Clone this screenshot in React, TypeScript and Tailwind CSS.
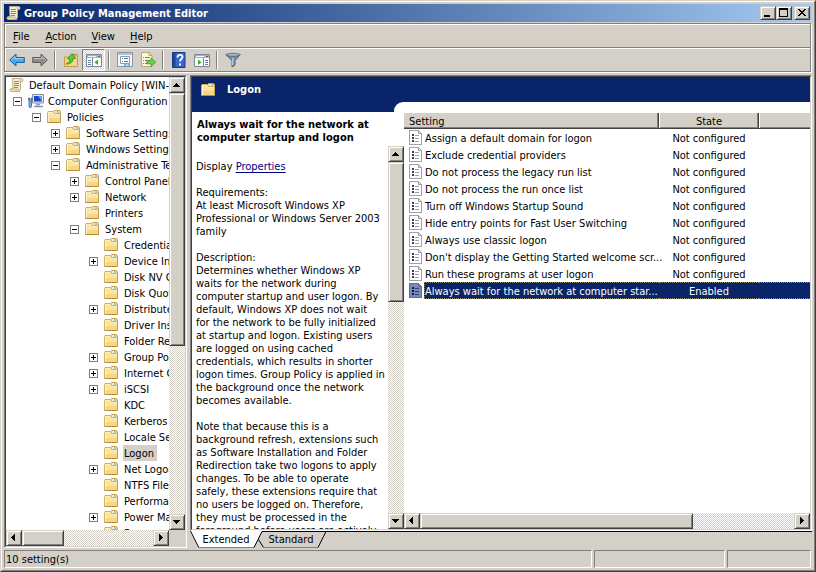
import type { ReactNode } from 'react';

const raised =
  'border border-t-[#d4d0c8] border-l-[#d4d0c8] border-r-[#404040] border-b-[#404040] bg-[#d4d0c8] shadow-[inset_1px_1px_0_#fff,inset_-1px_-1px_0_#808080]';
const checker =
  'bg-[image:repeating-conic-gradient(#ffffff_0_25%,#d4d0c8_0_50%)] bg-[length:2px_2px]';
const sunken =
  'border border-t-[#808080] border-l-[#808080] border-r-white border-b-white';

type Dir = 'up' | 'down' | 'left' | 'right';

const arrows: Record<Dir, string> = {
  up: 'M6 5h1v1h1v1h1v1h1v1H3V8h1V7h1V6h1z',
  down: 'M3 5h7v1H9v1H8v1H7v1H6V8H5V7H4V6H3z',
  left: 'M4 6h1V5h1V4h1V3h1v7H7V9H6V8H5V7H4z',
  right: 'M5 3h1v1h1v1h1v1h1v1H8v1H7v1H6v1H5z',
};

function ArrowButton({ dir }: { dir: Dir }) {
  return (
    <button type="button" aria-label={`Scroll ${dir}`} className={`size-4 shrink-0 ${raised}`}>
      <svg className="block" width="14" height="14" viewBox="0 0 14 14" shapeRendering="crispEdges">
        <path d={arrows[dir]} />
      </svg>
    </button>
  );
}

function VScroll({ thumb }: { thumb: string }) {
  return (
    <div className={`flex w-4 shrink-0 flex-col ${checker}`}>
      <ArrowButton dir="up" />
      <div className="min-h-0 flex-1">
        <div className={`${raised} ${thumb}`} />
      </div>
      <ArrowButton dir="down" />
    </div>
  );
}

function HScroll({ thumb }: { thumb: string }) {
  return (
    <div className={`flex h-4 min-w-0 flex-1 ${checker}`}>
      <ArrowButton dir="left" />
      <div className="min-w-0 flex-1">
        <div className={`h-4 ${raised} ${thumb}`} />
      </div>
      <ArrowButton dir="right" />
    </div>
  );
}

function FolderIcon() {
  return (
    <svg className="size-4 shrink-0" viewBox="0 0 16 16">
      <path d="M6.500 4.500V2.500l1-1h5l1 1v4h-7z" fill="#f3d48a" stroke="#c9a050" />
      <path d="M8 3h4" stroke="#fff" />
      <path d="M10 3h2" stroke="#6aa5d8" />
      <path d="M.5 3.500l.5-1h5l1 2h6.500V13.500H.5z" fill="#fbe3a0" stroke="#d5ae5c" />
      <path d="M1 9h12v4H1z" fill="#f6d684" />
      <path d="M1.500 13V3.500H6l1 2h6" fill="none" stroke="#fdf0c4" />
      <path d="M.5 13.500h13" stroke="#b38d3c" />
      <path d="M13.500 5v8.500" stroke="#c49c48" />
    </svg>
  );
}

function ScrollIcon() {
  return (
    <svg className="size-4 shrink-0" viewBox="0 0 16 16">
      <path d="M3.500 1.500h9c2 0 2 3 .5 3h-1.500V12l-1 2.500H2.500c-2 0-2-3 0-3h1.500z" fill="#f7efd0" stroke="#b8aa82" />
      <path d="M2 12h7c1 0 1 2.500 1.500 2.500H2.500C1 14.500 1 12.500 2 12z" fill="#eaddb0" stroke="#b8aa82" strokeWidth=".8" />
      <path d="M12 1.500c-1 1-.5 3 0 3" fill="none" stroke="#b8aa82" />
      <path d="M5 4.500h5M5 6.500h5M5 8.500h5M5 10.500h4" stroke="#8f8568" />
    </svg>
  );
}

function ComputerIcon() {
  return (
    <svg className="size-4 shrink-0" viewBox="0 0 16 16">
      <path d="M4.500 1.500h11v8.500h-11z" fill="#dfe5ee" stroke="#8792a5" />
      <path d="M6 3h8v5.500H6z" fill="#1747c8" />
      <path d="M10 3h4v5.500z" fill="#6f9cf2" />
      <path d="M8 10.500h4v2H8z" fill="#9aa5b5" />
      <path d="M6 13.500h9" stroke="#8792a5" strokeWidth="1.500" />
      <path d="M.5 6.500V5h1v2h1.500V5h1v1.500L3.500 8v5.500l-.5 1H1.500l-.5-1V8z" fill="#7fb0dc" stroke="#41658c" strokeWidth=".8" />
    </svg>
  );
}

function SettingIcon({ selected }: { selected?: boolean }) {
  const page = selected ? '#7b8ab5' : '#fff';
  const edge = selected ? '#5c6da0' : '#a2a2a2';
  const line = selected ? '#2d3f78' : '#9aa0b0';
  return (
    <svg className="h-[15px] w-[14px] shrink-0" viewBox="0 0 14 15" shapeRendering="crispEdges">
      <path d="M.5.500h9l3 3v11H.5z" fill={page} stroke={edge} />
      <path d="M9.500.500v3h3" fill="none" stroke={edge} />
      <path d="M3 4h2v2H3zM3 7h2v2H3zM3 10h2v2H3z" fill={selected ? '#0f1c4d' : '#3a3f55'} />
      <path d="M6 5.500h4M6 8.500h4M6 11.500h4" stroke={line} />
    </svg>
  );
}

function Twisty({ open }: { open: boolean }) {
  return (
    <button type="button" aria-label={open ? 'Collapse' : 'Expand'} className="size-[9px] shrink-0">
      <svg className="block" width="9" height="9" viewBox="0 0 9 9" shapeRendering="crispEdges">
        <path d="M.5.500h8v8h-8z" fill="#fff" stroke="#808080" />
        <path d={open ? 'M2 4.500h5' : 'M2 4.500h5M4.500 2v5'} stroke="#000" />
      </svg>
    </button>
  );
}

const indent = ['pl-[3px]', 'pl-[7px]', 'pl-[26px]', 'pl-[45px]', 'pl-[64px]', 'pl-[83px]'];

// [level, label, '+' closed, '-' open, '' leaf]
const tree: [number, string, string][] = [
  [0, 'Default Domain Policy [WIN-1', ''],
  [1, 'Computer Configuration', '-'],
  [2, 'Policies', '-'],
  [3, 'Software Settings', '+'],
  [3, 'Windows Settings', '+'],
  [3, 'Administrative Templates', '-'],
  [4, 'Control Panel', '+'],
  [4, 'Network', '+'],
  [4, 'Printers', ''],
  [4, 'System', '-'],
  [5, 'Credentials Delegation', ''],
  [5, 'Device Installation', '+'],
  [5, 'Disk NV Cache', ''],
  [5, 'Disk Quotas', ''],
  [5, 'Distributed COM', '+'],
  [5, 'Driver Installation', ''],
  [5, 'Folder Redirection', ''],
  [5, 'Group Policy', '+'],
  [5, 'Internet Communication', '+'],
  [5, 'iSCSI', '+'],
  [5, 'KDC', ''],
  [5, 'Kerberos', ''],
  [5, 'Locale Services', ''],
  [5, 'Logon', ''],
  [5, 'Net Logon', '+'],
  [5, 'NTFS Filesystem', ''],
  [5, 'Performance Control Panel', ''],
  [5, 'Power Management', '+'],
  [5, 'Recovery', ''],
];

const settings = [
  'Assign a default domain for logon',
  'Exclude credential providers',
  'Do not process the legacy run list',
  'Do not process the run once list',
  'Turn off Windows Startup Sound',
  'Hide entry points for Fast User Switching',
  'Always use classic logon',
  "Don't display the Getting Started welcome scr...",
  'Run these programs at user logon',
  'Always wait for the network at computer star...',
];

const requirements = `At least Microsoft Windows XP
Professional or Windows Server 2003
family`;

const description = `Determines whether Windows XP
waits for the network during
computer startup and user logon. By
default, Windows XP does not wait
for the network to be fully initialized
at startup and logon. Existing users
are logged on using cached
credentials, which results in shorter
logon times. Group Policy is applied in
the background once the network
becomes available.`;

const note = `Note that because this is a
background refresh, extensions such
as Software Installation and Folder
Redirection take two logons to apply
changes. To be able to operate
safely, these extensions require that
no users be logged on. Therefore,
they must be processed in the
foreground before users are actively`;

function Tool({ label, pressed, children }: { label: string; pressed?: boolean; children: ReactNode }) {
  return (
    <button
      type="button"
      aria-label={label}
      className={`flex h-[22px] w-[23px] shrink-0 items-center justify-center ${pressed ? `${sunken} ${checker}` : ''}`}
    >
      <svg className="size-4" viewBox="0 0 16 16">
        {children}
      </svg>
    </button>
  );
}

function Sep() {
  return (
    <div className="flex w-2 shrink-0 justify-center">
      <div className="h-[18px] w-[2px] border-l border-[#808080] bg-white" />
    </div>
  );
}

function CaptionButton({ label, d }: { label: string; d: string }) {
  return (
    <button type="button" aria-label={label} className={`h-[14px] w-4 ${raised}`}>
      <svg className="block" width="14" height="12" viewBox="0 0 14 12" shapeRendering="crispEdges">
        <path d={d} fillRule="evenodd" />
      </svg>
    </button>
  );
}

export default function App() {
  return (
    <div className="h-screen w-full cursor-default overflow-hidden border border-t-[#d4d0c8] border-r-[#404040] border-b-[#404040] border-l-[#d4d0c8] bg-[#d4d0c8] font-['DejaVu_Sans_Condensed','DejaVu_Sans',sans-serif] text-[11px] leading-[13px] text-black">
      <div className="flex h-full flex-col border border-t-white border-r-[#808080] border-b-[#808080] border-l-white p-[2px]">
        <header className="flex h-[18px] shrink-0 items-center bg-linear-to-r from-[#0a246a] to-[#a6caf0] px-[2px]">
          <ScrollIcon />
          <h1 className="flex-1 pl-[2px] font-bold text-white">Group Policy Management Editor</h1>
          <CaptionButton label="Minimize" d="M3 8h6v2H3z" />
          <CaptionButton label="Maximize" d="M2 1h9v9H2zM3 3h7v6H3z" />
          <div className="w-[2px]" />
          <CaptionButton
            label="Close"
            d="M3 2h2v1h1v1h2V3h1V2h2v1h-1v1H9v1H8v1h1v1h1v1h1v1H9V8H8V7H6v1H5v1H3V8h1V7h1V6h1V5H5V4H4V3H3z"
          />
        </header>

        <div className="mt-px mr-px shrink-0 border border-[#808080] shadow-[1px_1px_0_#fff]">
          <nav className="flex h-[23px] items-center border-t border-l border-white">
            {['File', 'Action', 'View', 'Help'].map((m) => (
              <button key={m} type="button" className="pr-[7px] pl-2 first:pl-[7px] first:pr-2">
                <span className="underline underline-offset-2">{m[0]}</span>
                {m.slice(1)}
              </button>
            ))}
          </nav>
          <div className="flex h-6 items-center border-t border-[#808080] shadow-[inset_1px_1px_0_#fff]">
            <Tool label="Back">
              <path d="M.7 8L7 2v3.500h8.300v5H7V14z" fill="#45a9ea" stroke="#1d5f9e" />
              <path d="M2.500 8L6 4.700v2h8.300" fill="none" stroke="#a5dcff" />
            </Tool>
            <Tool label="Forward">
              <path d="M15.300 8L9 2v3.500H.7v5H9V14z" fill="#8d8d8d" stroke="#5e5e5e" />
              <path d="M1.700 6.600H10v-2L13.500 8" fill="none" stroke="#c6c6c6" />
            </Tool>
            <Sep />
            <Tool label="Up one level">
              <path d="M8.500 4V2.500h5.500V5" fill="#e9c36a" stroke="#b8923c" />
              <path d="M1.500 5h6l1-1h6v10.500h-13z" fill="#f6d684" stroke="#c69d45" />
              <path d="M3 12c2-.5 4-2.500 4-5H4.500L9 1.500 12.500 6.500h-2.300c0 4-4 6-7.200 5.500z" fill="#5ccb3b" stroke="#2e8b22" strokeWidth=".8" />
            </Tool>
            <Tool label="Show/Hide Console Tree" pressed>
              <path d="M.5 2.500h15v12H.5z" fill="#fff" stroke="#7d8794" />
              <path d="M1 3h14v3H1z" fill="#a9b2bf" />
              <path d="M2 4.500h8" stroke="#f2f4f7" />
              <path d="M12 4.500h2" stroke="#5b6573" />
              <path d="M6.500 6v8" stroke="#7d8794" />
              <path d="M2 8.500h3M2 10.500h3M2 12.500h3" stroke="#5f7fae" />
              <path d="M12 7.500v5.500L8.500 10.250z" fill="#2fae2f" />
            </Tool>
            <Sep />
            <Tool label="Properties">
              <path d="M.5.500h15v14H.5z" fill="#f4f6f9" stroke="#8d949e" />
              <path d="M1 1h14v2H1z" fill="#b9c1cc" />
              <path d="M3.500 4.500h9v7h-9z" fill="#fff" stroke="#8d9bb0" />
              <path d="M5 6.500h1M7 6.500h4M5 9.500h1M7 9.500h4" stroke="#5278ad" />
              <path d="M7 13h2.500M10.500 13H13" stroke="#39a9e8" strokeWidth="1.500" />
            </Tool>
            <Tool label="Export List">
              <path d="M1.500.500h7.500l3 3v11H1.500z" fill="#fdf6d8" stroke="#b5a675" />
              <path d="M9 .5v3h3" fill="#e8dba8" stroke="#b5a675" />
              <path d="M3 5.500h1M5 5.500h5M3 8.500h1M5 8.500h3M3 11.500h1M5 11.500h3" stroke="#7a7a8c" />
              <path d="M7 8.500h4V6l4.700 4.200L11 14.300v-2.500H7z" fill="#6bd04a" stroke="#35992a" strokeWidth=".8" />
            </Tool>
            <Sep />
            <Tool label="Help">
              <path d="M1.500.500h12.500v15H1.500z" fill="#3a66c8" stroke="#173a86" />
              <path d="M2 1h2.500v14H2z" fill="#1f449c" />
              <path d="M6.500 5.500c0-3.500 5-3.500 5-.5 0 2-2.500 2-2.500 4.500" fill="none" stroke="#fff" strokeWidth="1.800" />
              <path d="M8 11.500h2v2H8z" fill="#fff" />
            </Tool>
            <Tool label="Show/Hide Action Pane">
              <path d="M.5 2.500h15v12H.5z" fill="#fff" stroke="#7d8794" />
              <path d="M1 3h14v3H1z" fill="#a9b2bf" />
              <path d="M2 4.500h8" stroke="#f2f4f7" />
              <path d="M12 4.500h2" stroke="#5b6573" />
              <path d="M9.500 6v8" stroke="#7d8794" />
              <path d="M11 8.500h3M11 10.500h3M11 12.500h3" stroke="#5f7fae" />
              <path d="M4 7.500v5.500l3.500-2.750z" fill="#2fae2f" />
            </Tool>
            <Sep />
            <Tool label="Filter">
              <path d="M.8 2.500h14.400L10 8.500v4.500l-3 2V8.500z" fill="#7390a8" stroke="#4d6478" />
              <ellipse cx="8" cy="2.800" rx="7" ry="1.500" fill="#a3b8c9" stroke="#4d6478" strokeWidth=".8" />
              <path d="M7.800 6v7" stroke="#dbe7ef" />
            </Tool>
          </div>
        </div>

        <main className="mt-[3px] flex min-h-0 flex-1 gap-[3px]">
          <section className="flex w-[183px] shrink-0 border border-t-[#808080] border-r-white border-b-white border-l-[#808080]">
            <div className="flex min-w-0 flex-1 flex-col border border-t-[#404040] border-r-[#d4d0c8] border-b-[#d4d0c8] border-l-[#404040]">
              <div className="flex min-h-0 flex-1">
                <ul className="min-w-0 flex-1 overflow-hidden bg-white">
                  {tree.map(([level, label, state]) => (
                    <li key={label} className={`flex h-4 items-center ${indent[level]}`}>
                      {level > 0 && (
                        <span className="mr-[6px] flex w-[9px] shrink-0">
                          {state && <Twisty open={state === '-'} />}
                        </span>
                      )}
                      {level === 0 ? <ScrollIcon /> : level === 1 ? <ComputerIcon /> : <FolderIcon />}
                      <span
                        className={`ml-[3px] h-4 px-px leading-[18px] whitespace-nowrap ${label === 'Logon' ? 'bg-[#d4d0c8] pr-[3px]' : ''}`}
                      >
                        {label}
                      </span>
                    </li>
                  ))}
                </ul>
                <VScroll thumb="h-[60%]" />
              </div>
              <div className="flex shrink-0">
                <HScroll thumb="w-[32%]" />
                <div className="w-4 bg-[#d4d0c8]" />
              </div>
            </div>
          </section>

          <section className="flex min-w-0 flex-1 flex-col">
            <div className="flex min-h-0 flex-1 border border-t-[#808080] border-r-white border-b-white border-l-[#808080]">
              <div className="flex min-w-0 flex-1 flex-col border border-t-[#404040] border-r-[#d4d0c8] border-b-[#d4d0c8] border-l-[#404040] bg-white">
                <div className="shrink-0 bg-[#0a246a]">
                  <div className="flex h-[25px] items-center gap-[10px] pl-[9px]">
                    <FolderIcon />
                    <h2 className="font-bold text-white">Logon</h2>
                  </div>
                  <div className="ml-[202px] h-[10px] rounded-tl-[9px] bg-white" />
                </div>

                <div className="flex min-h-0 flex-1">
                  <div className="flex w-[212px] shrink-0 flex-col">
                    <h3 className="h-[34px] shrink-0 pt-[6px] pl-[5px] font-bold whitespace-pre">
                      {'Always wait for the network at\ncomputer startup and logon'}
                    </h3>
                    <div className="flex min-h-0 flex-1">
                      <div className="min-w-0 flex-1 overflow-hidden pt-[14px] pl-[4px] whitespace-pre">
                        <p>
                          Display{' '}
                          <a href="#properties" className="text-[#00007f] underline underline-offset-2">
                            Properties
                          </a>
                        </p>
                        <p className="mt-[13px]">Requirements:</p>
                        <p>{requirements}</p>
                        <p className="mt-[13px]">Description:</p>
                        <p>{description}</p>
                        <p className="mt-[13px]">{note}</p>
                      </div>
                      <VScroll thumb="h-[40%]" />
                    </div>
                  </div>

                  <div className="flex min-w-0 flex-1 flex-col pt-px">
                    <div className="min-h-0 flex-1 overflow-hidden">
                      <table className="w-full table-fixed border-collapse">
                        <thead>
                          <tr className="h-4 bg-[#d4d0c8]">
                            <th className="w-[255px] p-0 pl-[5px] text-left font-normal shadow-[inset_-1px_-1px_0_#404040,inset_-2px_-2px_0_#808080]">
                              Setting
                            </th>
                            <th className="w-[100px] p-0 font-normal shadow-[inset_-1px_-1px_0_#404040,inset_1px_0_0_#fff,inset_-2px_-2px_0_#808080]">
                              State
                            </th>
                            <th aria-label="Comment" className="p-0 shadow-[inset_0_-1px_0_#404040,inset_1px_0_0_#fff,inset_0_-2px_0_#808080]" />
                          </tr>
                        </thead>
                        <tbody>
                          {settings.map((s, i) => {
                            const sel = i === settings.length - 1;
                            const cell = sel
                              ? 'h-[17px] border-y border-dotted border-[#8a8a6a] bg-[#0a246a] leading-[17px] text-white'
                              : 'h-[17px] leading-[19px]';
                            return (
                              <tr key={s}>
                                <td className="p-0">
                                  <div className="flex h-[17px] items-center pl-[5px]">
                                    <SettingIcon selected={sel} />
                                    <span
                                      className={`ml-px flex-1 whitespace-nowrap ${sel ? 'border-l' : 'pl-px'} ${cell}`}
                                    >
                                      {s}
                                    </span>
                                  </div>
                                </td>
                                <td className="p-0">
                                  <div className={`text-center ${cell}`}>{sel ? 'Enabled' : 'Not configured'}</div>
                                </td>
                                <td className="p-0">
                                  <div className={cell} />
                                </td>
                              </tr>
                            );
                          })}
                        </tbody>
                      </table>
                    </div>
                    <div className="flex shrink-0">
                      <HScroll thumb="w-[73%]" />
                    </div>
                  </div>
                </div>
              </div>
            </div>

            <div className="flex h-[17px] shrink-0">
              <div className="relative flex w-[136px] shrink-0">
                <svg className="absolute top-0 left-0" width="136" height="17" viewBox="0 0 136 17">
                  <path d="M0 0h72l-8 16H8z" fill="#fff" />
                  <path d="M8 16.500h56M74 16.500h54" stroke="#808080" />
                  <path d="M.5 0l8 16M72 .5L64 16.500M72 .5h64l-8 16M68.500 8.500l5 8" fill="none" stroke="#000" />
                </svg>
                <button type="button" className="relative h-[17px] w-[72px] text-center leading-[18px]">
                  Extended
                </button>
                <button type="button" className="relative h-[17px] w-[58px] text-center leading-[18px]">
                  Standard
                </button>
              </div>
              <div className="h-px flex-1 bg-black" />
            </div>
          </section>
        </main>

        <footer className="mt-[2px] mr-px flex h-[18px] shrink-0 gap-[2px]">
          <div className={`flex flex-1 items-center pl-px ${sunken}`}>10 setting(s)</div>
          <div className={`w-[131px] ${sunken}`} />
          <div className={`w-[84px] ${sunken}`} />
        </footer>
      </div>
    </div>
  );
}
